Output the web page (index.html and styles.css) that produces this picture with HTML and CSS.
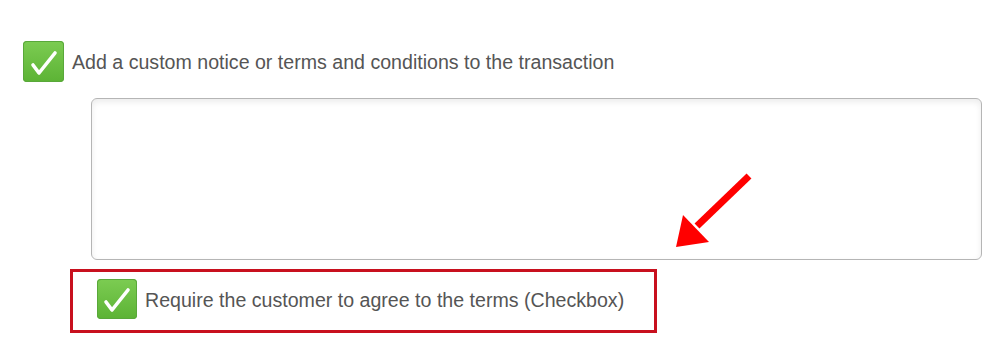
FILE: index.html
```html
<!DOCTYPE html>
<html lang="en">

<head>
  <meta charset="UTF-8">
  <title>Transaction Terms</title>
  <link rel="stylesheet" href="styles.css">
</head>

<body>
  <div class="terms">
    <div class="option">
      <span class="check">
        <svg viewBox="0 0 40 40" width="40" height="40"><path d="M9 23 L15 31 L31 11" fill="none" stroke="#fff" stroke-width="3.6" stroke-linecap="round" stroke-linejoin="round"/></svg>
      </span>
      <span class="label">Add a custom notice or terms and conditions to the transaction</span>
    </div>

    <div class="notice-wrap">
      <textarea class="notice"></textarea>
      <!-- annotation arrow -->
      <svg class="arrow" width="90" height="90" viewBox="0 0 90 90">
        <line x1="80" y1="8" x2="28" y2="58" stroke="#f00" stroke-width="7"/>
        <polygon points="7,79 14,47 40,74" fill="#f00"/>
      </svg>
    </div>

    <div class="agree-box">
      <div class="option">
        <span class="check">
          <svg viewBox="0 0 40 40" width="40" height="40"><path d="M9 23 L15 31 L31 11" fill="none" stroke="#fff" stroke-width="3.6" stroke-linecap="round" stroke-linejoin="round"/></svg>
        </span>
        <span class="label">Require the customer to agree to the terms (Checkbox)</span>
      </div>
    </div>
  </div>
</body>

</html>
```

FILE: styles.css
```css
body {
  margin: 0;
  background-color: #fff;
  font-family: Arial, "Liberation Sans", sans-serif;
}

.terms {
  padding: 41px 0 0 23px;
}

.option {
  display: flex;
  align-items: center;
  gap: 8px;
}

.check {
  width: 41px;
  height: 41px;
  border-radius: 4px;
  background: linear-gradient(#7ccc52, #5cb335);
  display: flex;
  align-items: center;
  justify-content: center;
  box-shadow: inset 0 0 0 1px #59a83a;
}

.label {
  font-size: 19.6px;
  color: #555;
  padding-top: 2px;
}

.notice-wrap {
  position: relative;
  margin: 16px 0 0 68px;
  width: 891px;
}

.notice {
  display: block;
  width: 891px;
  height: 162px;
  box-sizing: border-box;
  border: 1px solid #b5b5b5;
  border-radius: 6px;
  box-shadow: inset 0 3px 6px rgba(0, 0, 0, 0.08);
  resize: none;
  background: #fff;
}

.arrow {
  position: absolute;
  left: 578px;
  top: 70px;
}

.agree-box {
  margin: 9px 0 0 47px;
  width: 587px;
  height: 64px;
  box-sizing: border-box;
  border: 3px solid #c8101e;
  padding: 7px 0 0 24px;
}

.agree-box .check {
  width: 40px;
  height: 40px;
}
```
